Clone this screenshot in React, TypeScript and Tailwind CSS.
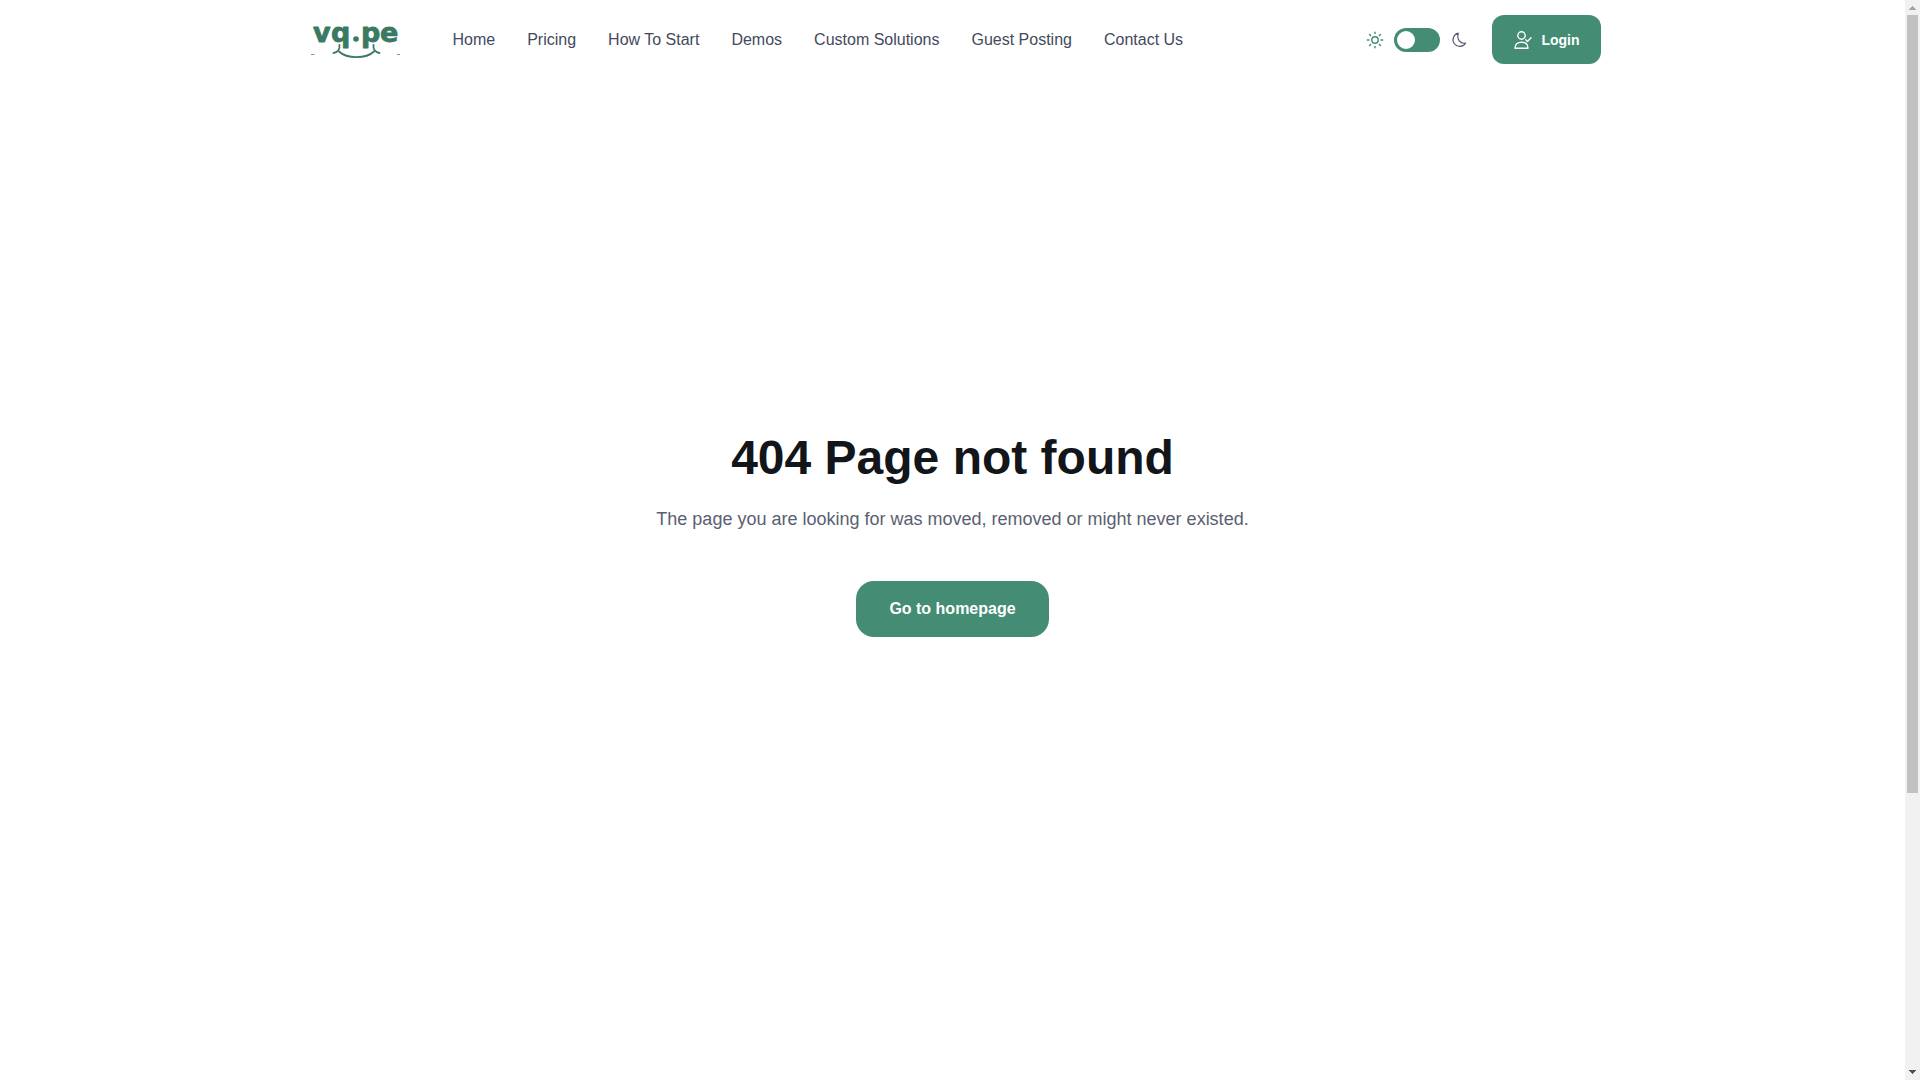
import React from "react";

const links = [
  "Home",
  "Pricing",
  "How To Start",
  "Demos",
  "Custom Solutions",
  "Guest Posting",
  "Contact Us",
];

function Logo() {
  return (
    <svg className="overflow-visible" width="100" height="48" viewBox="0 0 100 48" fill="none" aria-label="vq.pe">
      <g
        fill="#3a7a62"
        stroke="#3a7a62"
        strokeWidth="0.8"
        strokeLinejoin="round"
        fontFamily="DejaVu Sans, sans-serif"
        fontWeight="700"
        fontSize="27"
      >
        <text x="8" y="26">v</text>
        <text x="26" y="26">q</text>
        <text x="56" y="26">p</text>
        <text x="75" y="26">e</text>
      </g>
      <circle cx="51" cy="23" r="2.8" fill="#3a7a62" />
      <g stroke="#3a7a62" strokeWidth="1.8" strokeLinecap="round">
        <path d="M34 35.500C42 43 61 43 69 35.500" />
        <path d="M34.500 29C35 33 33 36.500 28.500 37" />
        <path d="M68.500 29C68 33 70 36.500 74.500 37" />
      </g>
      <path d="M6 38.500h3.500M92 38.500h3" stroke="#8a9a93" />
    </svg>
  );
}

function SunIcon() {
  return (
    <svg width="18" height="18" viewBox="0 0 18 18" fill="none" stroke="#448c74" strokeWidth="1.400" strokeLinecap="round">
      <circle cx="9" cy="9" r="3.2" />
      <path d="M9 1.300v1.200M9 15.500v1.200M1.300 9h1.700M15 9h1.700M3.600 3.600l1 1M13.400 13.400l1 1M3.600 14.400l1-1M13.400 4.600l1-1" />
    </svg>
  );
}

function MoonIcon() {
  return (
    <svg width="18" height="18" viewBox="0 0 18 18" fill="none" stroke="#565973" strokeWidth="1.2" strokeLinejoin="round">
      <path d="M8.300 2.200A6.700 6.700 0 1 0 15.600 12C10.500 13.300 6.400 8.300 8.300 2.200Z" />
    </svg>
  );
}

function UserCheckIcon() {
  return (
    <svg width="20" height="20" viewBox="0 0 20 20" fill="none" stroke="currentColor" strokeWidth="1.400" strokeLinecap="round" strokeLinejoin="round">
      <circle cx="8.500" cy="5.500" r="3.700" />
      <path d="M2 18.200C2 14.500 4.300 12.200 8.500 12.200S15 14.500 15 18.200Z" />
      <path d="M12.800 9.700l1.700 1.700 3.500-3.600" />
    </svg>
  );
}

export default function App() {
  return (
    <div className="flex h-screen bg-white font-['Liberation_Sans',Arial,sans-serif]">
      <div className="flex min-w-0 flex-1 flex-col">
        <header className="mx-auto flex w-full max-w-[1320px] items-center px-3 py-[15px]">
          <a href="#home" aria-label="vq.pe" className="mr-12 shrink-0">
            <Logo />
          </a>
          <nav className="flex flex-1 gap-8 whitespace-nowrap text-base text-[#434a5c]">
            {links.map((label) => (
              <a key={label} href="#page">
                {label}
              </a>
            ))}
          </nav>
          <label className="mr-6 flex items-center gap-[10px]">
            <SunIcon />
            <input type="checkbox" role="switch" aria-label="Dark mode" className="peer sr-only" />
            <span className="flex h-6 w-[46px] items-center rounded-full bg-[#448c74] p-[3px] peer-checked:justify-end">
              <span className="size-[18px] rounded-full bg-white" />
            </span>
            <MoonIcon />
          </label>
          <a
            href="#login"
            className="flex h-[49px] items-center gap-2 rounded-xl bg-[#448c74] px-[21px] text-sm font-bold text-white"
          >
            <UserCheckIcon />
            Login
          </a>
        </header>
        <main className="flex flex-1 flex-col items-center justify-center pb-24 text-center">
          <h1 className="mb-4 text-5xl leading-[62px] font-bold text-[#121519]">404 Page not found</h1>
          <p className="mb-12 text-lg leading-7 text-[#5a6072]">
            The page you are looking for was moved, removed or might never existed.
          </p>
          <a
            href="#home"
            className="flex h-14 items-center rounded-[18px] bg-[#448c74] px-[33px] text-base font-bold text-white"
          >
            Go to homepage
          </a>
        </main>
      </div>
      <div aria-hidden="true" className="flex w-[15px] shrink-0 flex-col items-center bg-[#f1f1f1]">
        <svg width="15" height="15" viewBox="0 0 15 15" shapeRendering="crispEdges">
          <path d="M4 10h7v-1h-1v-1h-1v-1h-1v-1h-1v1h-1v1h-1v1h-1z" fill="#a3a3a3" />
        </svg>
        <div className="h-[72%] w-[11px] bg-[#c1c1c1]" />
        <svg className="mt-auto" width="15" height="15" viewBox="0 0 15 15" shapeRendering="crispEdges">
          <path d="M4 5h7v1h-1v1h-1v1h-1v1h-1v-1h-1v-1h-1v-1h-1z" fill="#505050" />
        </svg>
      </div>
    </div>
  );
}
